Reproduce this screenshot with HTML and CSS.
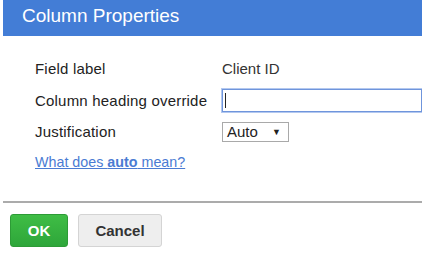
FILE: index.html
```html
<!DOCTYPE html>
<html lang="en">
<head>
  <meta charset="UTF-8">
  <title>Column Properties</title>
  <link rel="stylesheet" href="styles.css">
</head>
<body>

<div class="dialog">
  <header class="dialog-title">Column Properties</header>

  <section class="dialog-body">
    <div class="row">
      <span class="label">Field label</span>
      <span class="value">Client ID</span>
    </div>
    <div class="row">
      <span class="label">Column heading override</span>
      <div class="text-input"><span class="cursor"></span></div>
    </div>
    <div class="row">
      <span class="label">Justification</span>
      <div class="select">Auto<span class="caret">&#9660;</span></div>
    </div>
    <a href="#" class="help-link">What does <b>auto</b> mean?</a>
  </section>

  <footer class="dialog-footer">
    <a href="#" class="btn btn-ok">OK</a>
    <a href="#" class="btn btn-cancel">Cancel</a>
  </footer>
</div>

</body>
</html>
```

FILE: styles.css
```css
body {
  margin: 0;
  font-family: "Liberation Sans", Arial, sans-serif;
  background: white;
  color: #222;
}

.dialog {
  padding-left: 3px;
  height: 263px;
  overflow: hidden;
}

.dialog-title {
  background: #437dd6;
  color: white;
  font-size: 19px;
  height: 36px;
  line-height: 31px;
  padding-left: 19px;
}

.dialog-body {
  padding: 17px 0 0 32px;
  height: 148px;
  border-bottom: 2px solid #ababab;
}

.row {
  display: flex;
  align-items: center;
  height: 31.5px;
  font-size: 15px;
}

.label {
  width: 187px;
  white-space: nowrap;
  letter-spacing: 0.2px;
}

.value {
  color: #333;
}

.text-input {
  flex: 1;
  height: 23px;
  box-sizing: border-box;
  border: 1px solid #6f95dc;
  box-shadow: 0 0 0 1px #b3c8ef;
  display: flex;
  align-items: center;
  padding-left: 2px;
}

.cursor {
  width: 1px;
  height: 15px;
  background: #222;
}

.select {
  width: 67px;
  height: 20px;
  box-sizing: border-box;
  border: 1px solid #a9a9a9;
  display: flex;
  align-items: center;
  justify-content: space-between;
  padding: 0 7px 0 4px;
  font-size: 15px;
  color: #222;
}

.caret {
  font-size: 9px;
}

.help-link {
  display: inline-block;
  margin-top: 6px;
  color: #4a7bd3;
  font-size: 14.3px;
}

.dialog-footer {
  display: flex;
  gap: 10px;
  padding: 11px 0 0 7px;
}

.btn {
  display: inline-flex;
  align-items: center;
  justify-content: center;
  height: 33px;
  box-sizing: border-box;
  border-radius: 3px;
  font-weight: bold;
  font-size: 15px;
  text-decoration: none;
}

.btn-ok {
  width: 58px;
  color: white;
  background: linear-gradient(#3fbd45, #2ea63a);
  border: 1px solid #2d9b36;
}

.btn-cancel {
  width: 84px;
  color: #333;
  background: #eee;
  border: 1px solid #d4d4d4;
}
```
